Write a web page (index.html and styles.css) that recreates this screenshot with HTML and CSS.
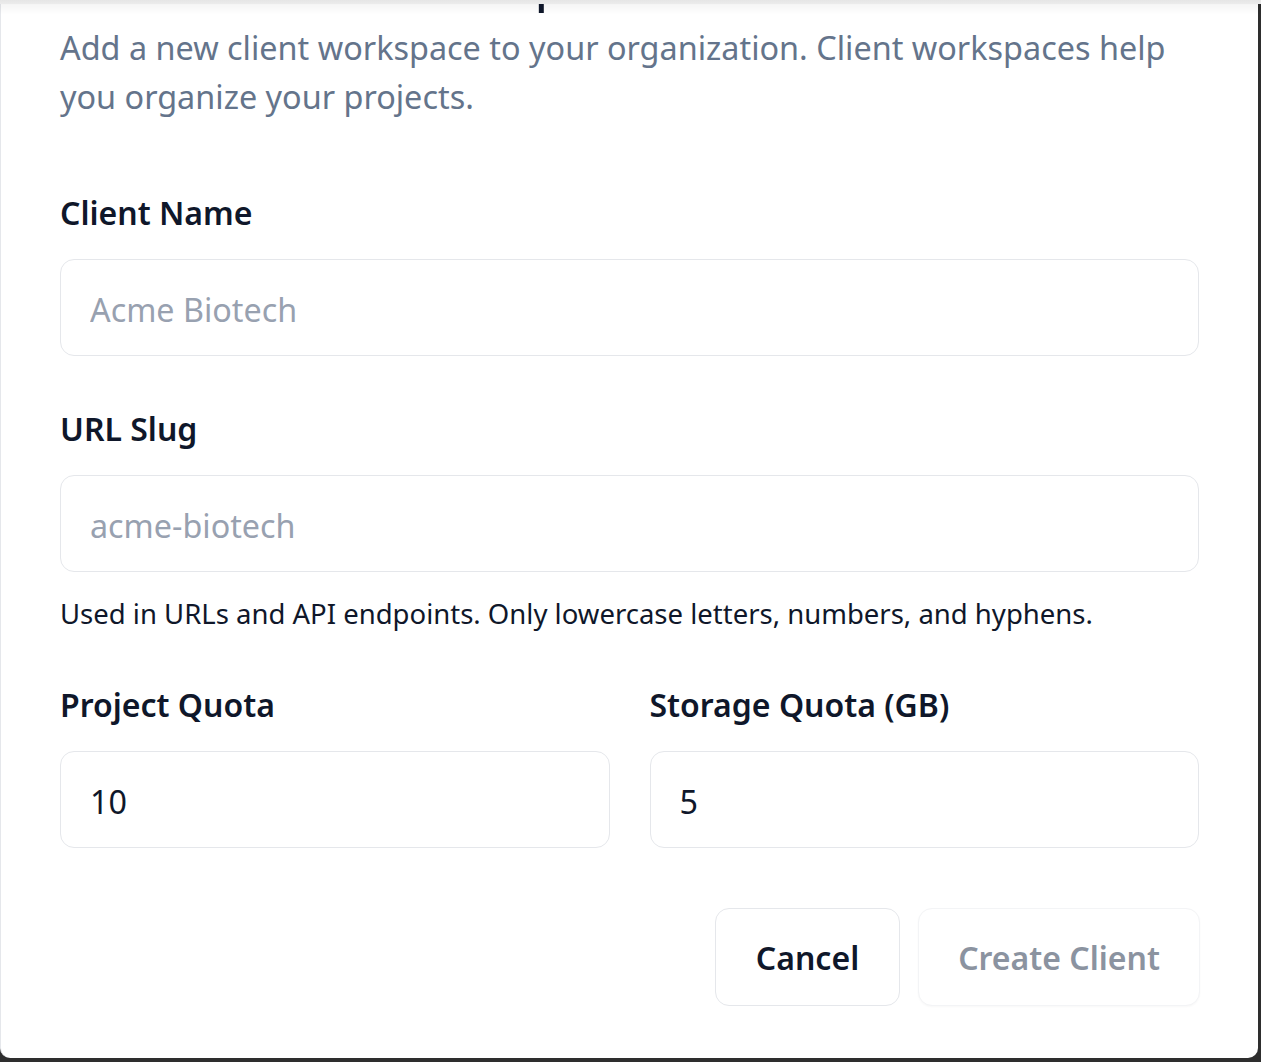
FILE: index.html
```html
<!DOCTYPE html>
<html lang="en">
<head>
<meta charset="utf-8">
<title>Create New Client Workspace</title>
<link rel="stylesheet" href="styles.css">
</head>
<body>
<div class="top-shade"></div>
<div class="modal">
  <h2 class="title">Create New Client Workspace</h2>
  <p class="description">Add a new client workspace to your organization. Client workspaces help you organize your projects.</p>
  <form class="form">
    <div class="field">
      <label class="label" for="name">Client Name</label>
      <input class="input" id="name" type="text" placeholder="Acme Biotech">
    </div>
    <div class="field">
      <label class="label" for="slug">URL Slug</label>
      <input class="input" id="slug" type="text" placeholder="acme-biotech">
      <p class="help">Used in URLs and API endpoints. Only lowercase letters, numbers, and hyphens.</p>
    </div>
    <div class="row">
      <div class="field">
        <label class="label" for="pq">Project Quota</label>
        <input class="input" id="pq" type="text" value="10">
      </div>
      <div class="field">
        <label class="label" for="sq">Storage Quota (GB)</label>
        <input class="input" id="sq" type="text" value="5">
      </div>
    </div>
    <div class="actions">
      <button type="button" class="btn btn-cancel">Cancel</button>
      <button type="button" class="btn btn-create" disabled>Create Client</button>
    </div>
  </form>
</div>
</body>
</html>
```
FILE: styles.css
```css
* { box-sizing: border-box; }
html, body {
  margin: 0;
  padding: 0;
  height: 100%;
  overflow: hidden;
}
body {
  background: #2e2e2e;
  font-family: "Noto Sans", "Open Sans", sans-serif;
  color: #0f172a;
}
.top-shade {
  position: fixed;
  top: 0;
  left: 0;
  right: 0;
  height: 14px;
  background: linear-gradient(#e6e6e6 0px, #ececec 4px, rgba(0,0,0,0.04) 4px, rgba(0,0,0,0) 14px);
  pointer-events: none;
  z-index: 2;
}
.modal {
  position: relative;
  width: 1258px;
  margin-top: -35px;
  background: #ffffff;
  border-left: 1px solid #e5e7eb;
  border-radius: 0 0 10px 10px;
  padding: 0 59px 52px 59px;
}
.title {
  position: relative;
  z-index: 3;
  margin: 0;
  font-size: 39.4px;
  line-height: 48px;
  font-weight: 600;
  color: #0f172a;
  clip-path: inset(39px 0 0 0);
}
.description {
  margin: 10px 0 0;
  font-size: 32.4px;
  line-height: 49px;
  color: #64748b;
}
.form {
  display: flex;
  flex-direction: column;
  gap: 49px;
  margin-top: 68px;
}
.field {
  display: flex;
  flex-direction: column;
  gap: 22px;
  min-width: 0;
}
.label {
  font-size: 32px;
  line-height: 48px;
  font-weight: 600;
  color: #0f172a;
}
.input {
  width: 100%;
  height: 97px;
  border: 1px solid #e5e7eb;
  border-radius: 14px;
  padding: 3px 29px 0;
  font-family: inherit;
  font-size: 32.3px;
  color: #0f172a;
  background: #ffffff;
  outline: none;
}
.input::placeholder { color: #98a1b0; }
.help {
  margin: 0;
  font-size: 27.5px;
  line-height: 40px;
  color: #0f172a;
}
.row {
  display: grid;
  grid-template-columns: 1fr 1fr;
  gap: 40px;
  margin-top: -2px;
}
.actions {
  display: flex;
  justify-content: flex-end;
  gap: 18px;
  margin: 11px -1px 0 0;
}
.btn {
  height: 98px;
  padding: 0 40px;
  border-radius: 14px;
  font-family: inherit;
  font-size: 32px;
  font-weight: 600;
  background: #ffffff;
}
.btn-cancel {
  border: 1px solid #e5e7eb;
  color: #0f172a;
}
.btn-create {
  padding: 0 39px;
  border: 1px solid #f3f4f6;
  color: #8b93a0;
  box-shadow: 0 1px 2px rgba(0,0,0,0.03);
}
```
